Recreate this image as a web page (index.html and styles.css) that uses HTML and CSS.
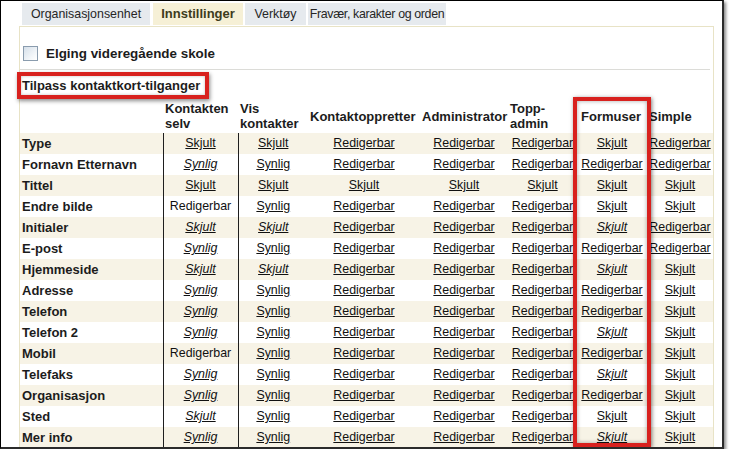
FILE: index.html
```html
<!DOCTYPE html>
<html lang="no">
<head>
<meta charset="utf-8">
<title>Innstillinger</title>
<link rel="stylesheet" href="styles.css">
</head>
<body>
<div class="frame">
  <div class="tabs">
    <div class="tab tab-org">Organisasjonsenhet</div>
    <div class="tab tab-active">Innstillinger</div>
    <div class="tab tab-tools">Verktøy</div>
    <div class="tab tab-abs">Fravær, karakter og orden</div>
  </div>
  <div class="panel">
    <div class="school"><span class="checkbox"></span><span class="school-name">Elging videregående skole</span></div>
    <div class="rule"></div>
    <div class="title">Tilpass kontaktkort-tilganger</div>
    <table class="grid">
      <colgroup>
        <col class="w-label"><col class="w-c1"><col class="w-c2"><col class="w-c3"><col class="w-c4"><col class="w-c5"><col class="w-c6"><col class="w-c7">
      </colgroup>
      <thead>
        <tr><th></th><th>Kontakten<br>selv</th><th>Vis<br>kontakter</th><th>Kontaktoppretter</th><th>Administrator</th><th>Topp-<br>admin</th><th class="th-form">Formuser</th><th>Simple</th></tr>
      </thead>
      <tbody>
        <tr class="alt"><td class="lbl">Type</td><td class="c1"><a>Skjult</a></td><td><a>Skjult</a></td><td><a>Redigerbar</a></td><td><a>Redigerbar</a></td><td><a>Redigerbar</a></td><td><a>Skjult</a></td><td><a>Redigerbar</a></td></tr>
        <tr><td class="lbl">Fornavn Etternavn</td><td class="c1"><a class="i">Synlig</a></td><td><a>Synlig</a></td><td><a>Redigerbar</a></td><td><a>Redigerbar</a></td><td><a>Redigerbar</a></td><td><a>Redigerbar</a></td><td><a>Redigerbar</a></td></tr>
        <tr class="alt"><td class="lbl">Tittel</td><td class="c1"><a>Skjult</a></td><td><a>Skjult</a></td><td><a>Skjult</a></td><td><a>Skjult</a></td><td><a>Skjult</a></td><td><a>Skjult</a></td><td><a>Skjult</a></td></tr>
        <tr><td class="lbl">Endre bilde</td><td class="c1">Redigerbar</td><td><a>Synlig</a></td><td><a>Redigerbar</a></td><td><a>Redigerbar</a></td><td><a>Redigerbar</a></td><td><a>Skjult</a></td><td><a>Skjult</a></td></tr>
        <tr class="alt"><td class="lbl">Initialer</td><td class="c1"><a class="i">Skjult</a></td><td><a class="i">Skjult</a></td><td><a>Redigerbar</a></td><td><a>Redigerbar</a></td><td><a>Redigerbar</a></td><td><a class="i">Skjult</a></td><td><a>Redigerbar</a></td></tr>
        <tr><td class="lbl">E-post</td><td class="c1"><a class="i">Synlig</a></td><td><a>Synlig</a></td><td><a>Redigerbar</a></td><td><a>Redigerbar</a></td><td><a>Redigerbar</a></td><td><a>Redigerbar</a></td><td><a>Redigerbar</a></td></tr>
        <tr class="alt"><td class="lbl">Hjemmeside</td><td class="c1"><a class="i">Skjult</a></td><td><a class="i">Skjult</a></td><td><a>Redigerbar</a></td><td><a>Redigerbar</a></td><td><a>Redigerbar</a></td><td><a class="i">Skjult</a></td><td><a>Skjult</a></td></tr>
        <tr><td class="lbl">Adresse</td><td class="c1"><a class="i">Synlig</a></td><td><a>Synlig</a></td><td><a>Redigerbar</a></td><td><a>Redigerbar</a></td><td><a>Redigerbar</a></td><td><a>Redigerbar</a></td><td><a>Skjult</a></td></tr>
        <tr class="alt"><td class="lbl">Telefon</td><td class="c1"><a class="i">Synlig</a></td><td><a>Synlig</a></td><td><a>Redigerbar</a></td><td><a>Redigerbar</a></td><td><a>Redigerbar</a></td><td><a>Redigerbar</a></td><td><a>Skjult</a></td></tr>
        <tr><td class="lbl">Telefon 2</td><td class="c1"><a class="i">Synlig</a></td><td><a>Synlig</a></td><td><a>Redigerbar</a></td><td><a>Redigerbar</a></td><td><a>Redigerbar</a></td><td><a class="i">Skjult</a></td><td><a>Skjult</a></td></tr>
        <tr class="alt"><td class="lbl">Mobil</td><td class="c1">Redigerbar</td><td><a>Synlig</a></td><td><a>Redigerbar</a></td><td><a>Redigerbar</a></td><td><a>Redigerbar</a></td><td><a>Redigerbar</a></td><td><a>Skjult</a></td></tr>
        <tr><td class="lbl">Telefaks</td><td class="c1"><a class="i">Synlig</a></td><td><a>Synlig</a></td><td><a>Redigerbar</a></td><td><a>Redigerbar</a></td><td><a>Redigerbar</a></td><td><a class="i">Skjult</a></td><td><a>Skjult</a></td></tr>
        <tr class="alt"><td class="lbl">Organisasjon</td><td class="c1"><a class="i">Synlig</a></td><td><a>Synlig</a></td><td><a>Redigerbar</a></td><td><a>Redigerbar</a></td><td><a>Redigerbar</a></td><td><a>Redigerbar</a></td><td><a>Skjult</a></td></tr>
        <tr><td class="lbl">Sted</td><td class="c1"><a class="i">Skjult</a></td><td><a>Synlig</a></td><td><a>Redigerbar</a></td><td><a>Redigerbar</a></td><td><a>Redigerbar</a></td><td><a>Skjult</a></td><td><a>Skjult</a></td></tr>
        <tr class="alt"><td class="lbl">Mer info</td><td class="c1"><a class="i">Synlig</a></td><td><a>Synlig</a></td><td><a>Redigerbar</a></td><td><a>Redigerbar</a></td><td><a>Redigerbar</a></td><td><a class="i">Skjult</a></td><td><a>Skjult</a></td></tr>
      </tbody>
    </table>
    <div class="highlight"></div>
  </div>
</div>
</body>
</html>
```

FILE: styles.css
```css
html, body {
  margin: 0;
  padding: 0;
  background: #ffffff;
}

body {
  font-family: "Liberation Sans", Arial, sans-serif;
  color: #1a1a1a;
}

.frame {
  box-sizing: border-box;
  width: 724px;
  height: 449px;
  border-top: 1px solid #000;
  border-left: 1px solid #000;
  border-right: 2px solid #2b2b2b;
  border-bottom: 2px solid #2b2b2b;
  box-shadow: 2px 2px 3px #8a8a8a;
  overflow: hidden;
  padding: 2px 0 0 18px;
  background: #fff;
}

/* Tabs */
.tabs {
  display: flex;
  gap: 2px;
  margin-left: 3px;
  height: 22px;
}

.tab {
  background: #e6eaee;
  font-size: 12.4px;
  line-height: 22px;
  text-align: center;
  color: #262626;
  white-space: nowrap;
}

.tab-org { width: 128px; margin-right: 1px; }
.tab-active {
  width: 90px;
  background: #f6f0d6;
  font-weight: bold;
  font-size: 13px;
  color: #3d3b1c;
}
.tab-tools { width: 61px; }
.tab-abs {
  width: 138px;
  letter-spacing: -0.35px;
}

/* Panel */
.panel {
  position: relative;
  box-sizing: border-box;
  width: 695px;
  height: 430px;
  margin-top: 1px;
  border: 1px solid #e8e3c6;
  border-bottom: none;
}

.school {
  display: flex;
  align-items: center;
  gap: 8px;
  margin-top: 19px;
  padding-left: 3px;
  height: 15px;
}

.checkbox {
  box-sizing: border-box;
  width: 15px;
  height: 15px;
  border: 1px solid #8a9cae;
  background: linear-gradient(135deg, #d6e0ea 0%, #f4f7fa 70%, #ffffff 100%);
}

.school-name {
  font-weight: bold;
  font-size: 13.4px;
  line-height: 15px;
  color: #1c1c1c;
}

.rule {
  margin-top: 8px;
  margin-right: 3px;
  height: 1px;
  background: #dcdcd8;
}

.title {
  width: fit-content;
  margin-top: 2px;
  margin-left: -3px;
  border: 4px solid #d8211e;
  padding: 0 5px 0 1px;
  height: 19px;
  line-height: 19px;
  font-weight: bold;
  font-size: 13px;
  color: #1c1c1c;
  box-shadow: 1px 2px 4px rgba(0, 0, 0, 0.45), inset 0 0 3px rgba(0, 0, 0, 0.25);
}

/* Table */
.grid {
  width: 693px;
  border-collapse: collapse;
  table-layout: fixed;
}

.w-label { width: 143px; }
.w-c1 { width: 75px; }
.w-c2 { width: 70px; }
.w-c3 { width: 112px; }
.w-c4 { width: 88px; }
.w-c5 { width: 69px; }
.w-c6 { width: 70px; }
.w-c7 { width: 66px; }

.grid th {
  height: 34px;
  padding: 0 2px;
  text-align: left;
  vertical-align: middle;
  font-weight: bold;
  font-size: 13px;
  line-height: 15px;
  color: #1c1c1c;
  white-space: nowrap;
}

.grid .th-form { padding-left: 4px; }

.grid td {
  height: 21px;
  padding: 0;
  text-align: center;
  vertical-align: middle;
  font-size: 12.4px;
  line-height: 15px;
  color: #111;
  white-space: nowrap;
}

.grid tr.alt td { background: #f7f3e6; }

.grid td.lbl {
  text-align: left;
  padding-left: 2px;
  font-weight: bold;
  font-size: 13px;
  color: #1c1c1c;
}

.grid td.c1 {
  border-left: 1px solid #1e1e1e;
  border-right: 1px solid #1e1e1e;
}

.grid a {
  color: #111;
  text-decoration: underline;
}

.grid a.i { font-style: italic; }

/* Annotation overlay around the Formuser column */
.highlight {
  position: absolute;
  left: 553px;
  top: 70px;
  width: 78px;
  height: 350px;
  box-sizing: border-box;
  border: 4px solid #d8211e;
  box-shadow: 1px 1px 4px rgba(0, 0, 0, 0.5), inset 0 0 4px rgba(0, 0, 0, 0.35);
}
```
